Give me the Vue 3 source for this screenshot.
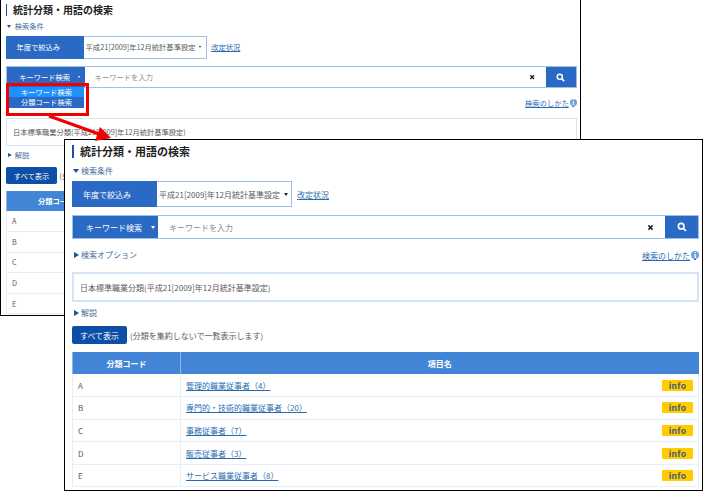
<template>
    <div class="page">
        <section v-for="win in windows" :key="win" class="window" :class="win">
            <h1 class="page-title">統計分類・用語の検索</h1>
            <div class="toggle open">検索条件</div>

            <div class="year-row">
                <div class="year-label">年度で絞込み</div>
                <div class="year-select">平成21[2009]年12月統計基準設定<i class="caret dark"></i></div>
                <a class="link revise">改定状況</a>
            </div>

            <div class="search-row">
                <div class="search-type">キーワード検索<i class="caret"></i></div>
                <div class="search-input">キーワードを入力</div>
                <svg class="clear" viewBox="0 0 10 10">
                    <path d="M2 2l6 6M8 2l-6 6" stroke="#222" stroke-width="2.2" fill="none" />
                </svg>
                <button class="search-btn">
                    <svg viewBox="0 0 12 12" width="10" height="10">
                        <circle cx="5" cy="5" r="3.4" stroke="#fff" stroke-width="1.9" fill="none" />
                        <path d="M7.6 7.6l3.2 3.2" stroke="#fff" stroke-width="2.1" />
                    </svg>
                </button>
            </div>

            <div class="option-row">
                <div class="toggle">検索オプション</div>
                <a class="link howto">検索のしかた<span class="info-dot">i</span></a>
            </div>

            <div class="desc-box">日本標準職業分類(平成21[2009]年12月統計基準設定)</div>

            <div class="toggle note">解説</div>

            <div class="show-row">
                <button class="show-all">すべて表示</button>
                <span>(分類を集約しないで一覧表示します)</span>
            </div>

            <table class="code-table">
                <thead>
                    <tr>
                        <th class="col-code">分類コード</th>
                        <th>項目名</th>
                    </tr>
                </thead>
                <tbody>
                    <tr v-for="row in rows" :key="row.code">
                        <td>{{ row.code }}</td>
                        <td>
                            <div class="name-cell">
                                <a class="link">{{ row.name }}</a>
                                <span class="badge">info</span>
                            </div>
                        </td>
                    </tr>
                </tbody>
            </table>

            <div v-if="win === 'back'" class="type-menu">
                <div class="menu-item active">キーワード検索</div>
                <div class="menu-item">分類コード検索</div>
            </div>
        </section>

        <div class="red-box"></div>
        <svg class="red-arrow" viewBox="0 0 80 40" width="80" height="40">
            <path d="M8 2L58 20" stroke="#f00000" stroke-width="3" fill="none" />
            <path d="M70 24L54 27L59 13Z" fill="#f00000" />
        </svg>
    </div>
</template>

<script setup>
const windows = ['back', 'front'];

const rows = [
    { code: 'A', name: '管理的職業従事者（4）' },
    { code: 'B', name: '専門的・技術的職業従事者（20）' },
    { code: 'C', name: '事務従事者（7）' },
    { code: 'D', name: '販売従事者（3）' },
    { code: 'E', name: 'サービス職業従事者（8）' }
];
</script>

<style scoped>
.page {
    position: relative;
    width: 703px;
    height: 491px;
    overflow: hidden;
    background: #fff;
    color: #5a5a5a;
    font-family: "Noto Sans CJK JP", "Noto Sans", sans-serif;
    font-size: 8px;
}

.window {
    position: absolute;
    box-sizing: border-box;
    overflow: hidden;
    padding: 5px 3px 0 7px;
    background: #fff;
    border: 1px solid #000;
}

.window.front {
    left: 64px;
    top: 139px;
    width: 639px;
    height: 352px;
}

.window.back {
    zoom: 0.91;
    left: 0;
    top: -1px;
    width: 639px;
    height: 348px;
    padding-top: 4px;
    padding-left: 6px;
    padding-right: 4px;
}

.page-title {
    margin: 0;
    height: 13px;
    padding-left: 6px;
    border-left: 2px solid #1d50a2;
    color: #222;
    font-size: 11px;
    font-weight: 700;
    line-height: 13px;
}

.toggle {
    position: relative;
    padding-left: 9px;
    color: #4a6c9a;
    font-size: 8px;
    line-height: 12px;
}

.toggle::before {
    content: "";
    position: absolute;
    left: 2px;
    top: 3px;
    border-style: solid;
    border-width: 3px 0 3px 5px;
    border-color: transparent transparent transparent #1d50a2;
}

.toggle.open {
    margin-top: 7px;
}

.back .toggle.open {
    margin-top: 6px;
}

.toggle.open::before {
    left: 1px;
    top: 4px;
    border-width: 4px 3px 0;
    border-color: #1d50a2 transparent transparent;
}

.year-row {
    display: flex;
    align-items: center;
    margin-top: 4px;
    height: 26px;
}

.year-label {
    box-sizing: border-box;
    display: flex;
    align-items: center;
    width: 85px;
    height: 100%;
    padding-left: 11px;
    background: #2a69c4;
    color: #fff;
    font-size: 8px;
}

.year-select {
    box-sizing: border-box;
    display: flex;
    align-items: center;
    width: 135px;
    height: 100%;
    padding-left: 2px;
    border: 1px solid #9dc0ea;
    border-left: none;
    white-space: nowrap;
    font-size: 8px;
}

.caret {
    margin-left: 4px;
    border-style: solid;
    border-width: 3px 2px 0;
    border-color: #fff transparent transparent;
}

.caret.dark {
    border-top-color: #222;
}

.link {
    color: #2a6bb0;
    text-decoration: underline;
    white-space: pre;
}

.revise {
    margin-left: 5px;
}

.search-row {
    display: flex;
    align-items: center;
    box-sizing: border-box;
    height: 24px;
    margin-top: 8px;
    border: 1px solid #9dc0ea;
}

.search-type {
    display: flex;
    align-items: center;
    box-sizing: border-box;
    flex: none;
    width: 85px;
    height: 100%;
    padding-left: 13px;
    background: #2a69c4;
    color: #fff;
    font-size: 8px;
}

.search-type .caret {
    margin-left: 9px;
}

.search-input {
    flex: 1;
    padding-left: 11px;
    color: #8c8c8c;
    font-size: 8px;
}

.clear {
    width: 7px;
    height: 7px;
    margin-right: 11px;
}

.search-btn {
    display: flex;
    align-items: center;
    justify-content: center;
    width: 33px;
    height: 100%;
    padding: 0;
    border: none;
    background: #2a69c4;
}

.option-row {
    display: flex;
    align-items: center;
    justify-content: space-between;
    height: 12px;
    margin-top: 10px;
}

.howto {
    display: flex;
    align-items: center;
}

.info-dot {
    display: inline-flex;
    align-items: center;
    justify-content: center;
    width: 8px;
    height: 8px;
    margin-left: 1px;
    border-radius: 50%;
    background: #6f9fdc;
    color: #fff;
    font-size: 7px;
    font-weight: 700;
}

.desc-box {
    display: flex;
    align-items: center;
    box-sizing: border-box;
    height: 30px;
    margin-top: 11px;
    padding-left: 6px;
    border: 2px solid #d6e4f7;
}

.toggle.note {
    margin-top: 5px;
}

.show-row {
    display: flex;
    align-items: center;
    gap: 3px;
    margin-top: 7px;
    height: 18px;
}

.show-all {
    width: 55px;
    height: 18px;
    padding: 0;
    border: none;
    border-radius: 2px;
    background: #0d4ea6;
    color: #fff;
    font-family: inherit;
    font-size: 8px;
}

.code-table {
    width: 100%;
    margin-top: 8px;
    border-collapse: collapse;
    table-layout: fixed;
}

.code-table th {
    height: 22px;
    padding: 0;
    border-left: 1px solid #8fb5e6;
    background: #4285d6;
    color: #fff;
    font-size: 8px;
}

.col-code {
    width: 107px;
}

.code-table td {
    height: 22.6px;
    padding: 0 0 0 5px;
    border: 1px solid #e6eefa;
    border-top: none;
    box-sizing: border-box;
}

.name-cell {
    display: flex;
    align-items: center;
    justify-content: space-between;
}

.badge {
    width: 31px;
    height: 11px;
    margin-right: 5px;
    border-radius: 1px;
    background: #ffcc00;
    color: #3d5a80;
    font-size: 8.5px;
    font-weight: 700;
    line-height: 10px;
    text-align: center;
    letter-spacing: 0.3px;
}

.type-menu {
    position: absolute;
    left: 9px;
    top: 95px;
    width: 82px;
    background: #2a69c4;
}

.menu-item {
    height: 12px;
    color: #fff;
    font-size: 8px;
    line-height: 12px;
    text-align: center;
}

.menu-item.active {
    background: #1e90ff;
}

.red-box {
    position: absolute;
    left: 6px;
    top: 83px;
    width: 77px;
    height: 27px;
    border: 3px solid #f00000;
}

.red-arrow {
    position: absolute;
    left: 41px;
    top: 114px;
}
</style>
